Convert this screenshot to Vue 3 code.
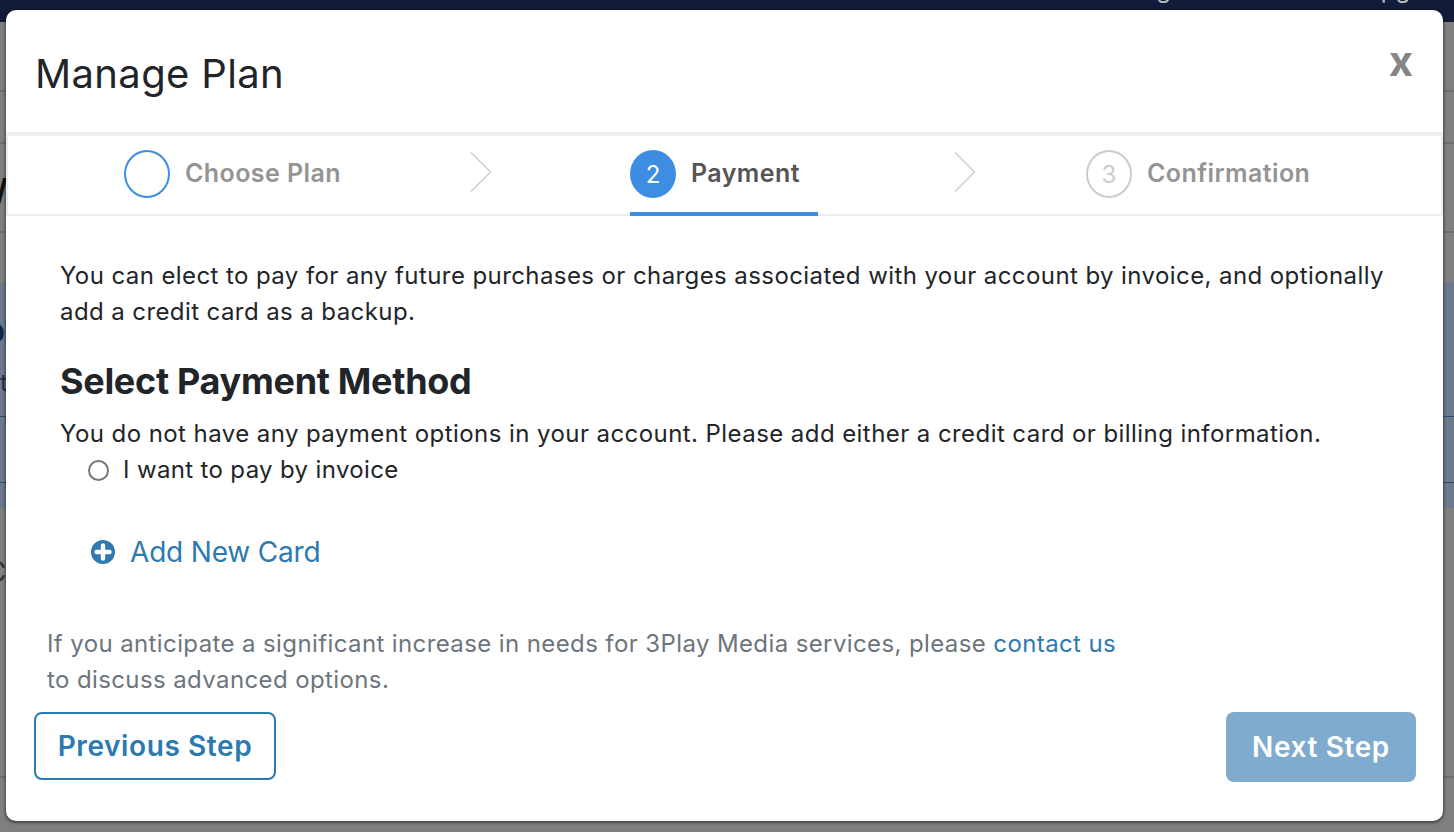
<script setup>
const steps = [
  { n: '', label: 'Choose Plan', state: 'done' },
  { n: '2', label: 'Payment', state: 'active' },
  { n: '3', label: 'Confirmation', state: 'todo' }
]
</script>

<template>
  <div class="page">
    <div class="topbar">
      <span class="top-a">Billing</span>
      <span class="top-b">Upgrade</span>
    </div>
    <div class="bg-row r1"></div>
    <div class="bg-row r2"></div>
    <div class="bg-row r3"><span class="bg-w">W</span></div>
    <div class="bg-row r4"></div>
    <div class="bg-panel">
      <div class="bg-p1">
        <span class="bg-o">o</span>
        <span class="bg-t">t</span>
      </div>
      <div class="bg-p2"></div>
      <div class="bg-p3"></div>
    </div>
    <div class="bg-c"><span class="bg-o2">C</span></div>

    <div class="modal">
      <header class="head">
        <h1>Manage Plan</h1>
        <span class="close">x</span>
      </header>
      <nav class="steps">
        <template v-for="(s, i) in steps" :key="s.label">
          <div class="step" :class="s.state">
            <span class="dot">{{ s.n }}</span>
            <span class="lbl">{{ s.label }}</span>
          </div>
          <svg v-if="i < 2" class="chev" width="24" height="42" viewBox="0 0 24 42">
            <path d="M2 1.5 L21.5 21 L2 40.5" fill="none" stroke="#cfcfcf" stroke-width="1.6" />
          </svg>
        </template>
      </nav>
      <section class="body">
        <p class="intro">You can elect to pay for any future purchases or charges associated with your account by invoice, and optionally add a credit card as a backup.</p>
        <h2>Select Payment Method</h2>
        <p class="line">You do not have any payment options in your account. Please add either a credit card or billing information.</p>
        <label class="radio"><span class="ring"></span>I want to pay by invoice</label>
        <a class="add">
          <svg width="24" height="24" viewBox="0 0 24 24">
            <circle cx="12" cy="12" r="12" fill="#2d7ab0" />
            <path d="M12 5.5v13M5.5 12h13" stroke="#fff" stroke-width="4.4" stroke-linecap="round" />
          </svg>
          Add New Card
        </a>
        <p class="note">If you anticipate a significant increase in needs for 3Play Media services, please <a>contact us</a><br />to discuss advanced options.</p>
      </section>
      <footer class="foot">
        <button class="btn prev">Previous Step</button>
        <button class="btn next">Next Step</button>
      </footer>
    </div>
  </div>
</template>

<style scoped>
.page {
  position: relative;
  width: 1454px;
  height: 832px;
  overflow: hidden;
  background: #7f7f7f;
  font-family: Inter, "Liberation Sans", sans-serif;
  color: #212529;
}
.topbar { height: 22px; background: #141b38; position: relative; overflow: hidden; }
.top-a, .top-b { position: absolute; top: -22px; font-size: 24px; line-height: 24px; color: #b9bcc6; white-space: nowrap; }
.top-a { left: 1103px; }
.top-b { left: 1363px; }
.bg-row { border-bottom: 2px solid #6e6e6e; box-sizing: border-box; position: relative; }
.r1 { height: 70px; }
.r2 { height: 52px; }
.r3 { height: 89px; }
.r4 { height: 49px; border-bottom: 0; }
.bg-w { position: absolute; left: -28px; top: 25px; font-size: 36px; line-height: 44px; font-weight: 500; color: #111; }
.bg-panel { height: 226px; background: #6c7a8c; display: flex; flex-direction: column; }
.bg-p1 { height: 135px; border-bottom: 1px solid #2d4a70; box-sizing: border-box; position: relative; }
.bg-p2 { height: 66px; border-bottom: 1px solid #2d4a70; box-sizing: border-box; }
.bg-o { position: absolute; left: -17px; top: 26px; font-size: 36px; line-height: 44px; font-weight: 700; color: #12264a; }
.bg-t { position: absolute; left: 0; top: 86px; font-size: 24px; line-height: 30px; color: #1f2f4a; }
.bg-c { position: relative; height: 270px; border-bottom: 2px solid #6e6e6e; box-sizing: border-box; }
.bg-o2 { position: absolute; left: -14px; top: 47px; font-size: 28px; line-height: 34px; color: #333; }

.modal {
  position: absolute;
  left: 6px;
  top: 10px;
  width: 1437px;
  height: 811px;
  background: #fff;
  border-radius: 10px;
  box-shadow: 0 1px 3px 1px rgba(0, 0, 0, .45);
  display: flex;
  flex-direction: column;
}
.head {
  height: 122px;
  padding: 0 30px 0 29px;
  display: flex;
  align-items: center;
  justify-content: space-between;
  box-sizing: border-box;
}
h1 { margin: 6px 0 0; font-size: 40px; font-weight: 400; line-height: 48px; letter-spacing: .36px; color: #212529; }
.close { font-size: 42px; font-weight: 700; color: #868686; line-height: 44px; margin: -20px 0 0; }
.steps {
  height: 84px;
  box-sizing: border-box;
  border: 2px solid #ecedf1;
  border-top-width: 4px;
  display: flex;
  align-items: center;
  position: relative;
}
.step {
  position: absolute;
  top: 14px;
  height: 64px;
  display: flex;
  gap: 15px;
  font-weight: 600;
  font-size: 25px;
  letter-spacing: .42px;
  color: #949494;
}
.step.done { left: 116px; }
.step.active { left: 622px; width: 188px; border-bottom: 4px solid #3d8de2; color: #555; height: 62px; }
.step.todo { left: 1078px; }
.dot {
  width: 46px;
  height: 48px;
  box-sizing: border-box;
  border-radius: 50%;
  display: flex;
  align-items: center;
  justify-content: center;
  border: 2px solid #ccc;
  color: #ccc;
  font-weight: 400;
  font-size: 24px;
  letter-spacing: 0;
}
.done .dot { border-color: #3d8de2; }
.active .dot { background: #3d8de2; border-color: #3d8de2; color: #fff; }
.lbl { line-height: 46px; }
.chev { position: absolute; top: 15px; }
.chev:nth-of-type(1) { left: 461px; }
.chev:nth-of-type(2) { left: 945px; }
.body { flex: 1; padding: 42px 54px 0; position: relative; font-size: 24px; line-height: 36px; letter-spacing: .43px; }
p { margin: 0; }
.intro { width: 1330px; letter-spacing: .41px; }
h2 { margin: 29px 0 13px; font-size: 36px; line-height: 44px; font-weight: 700; letter-spacing: -.3px; color: #212529; }
.radio { display: flex; align-items: center; margin-left: 28px; gap: 14px; letter-spacing: .35px; }
.ring { width: 21px; height: 21px; border: 2px solid #767676; border-radius: 50%; box-sizing: border-box; }
.add {
  display: flex;
  align-items: center;
  gap: 15px;
  color: #2d7ab0;
  font-size: 28px;
  letter-spacing: -.18px;
  margin: 44px 0 0 31px;
  line-height: 40px;
}
.note { margin: 54px 0 0 -13px; color: #6c757d; letter-spacing: .39px; }
.note a { color: #2d7ab0; }
.foot {
  position: absolute;
  left: 28px;
  right: 27px;
  top: 702px;
  display: flex;
  justify-content: space-between;
}
.btn {
  height: 68px;
  border-radius: 8px;
  font-family: inherit;
  font-size: 28px;
  font-weight: 600;
  letter-spacing: .6px;
  box-sizing: border-box;
  padding: 0;
}
.prev { width: 242px; background: #fff; border: 2px solid #2d7ab0; color: #2d7ab0; }
.next { width: 190px; height: 70px; background: #7eabce; border: 0; color: #fff; }
</style>
